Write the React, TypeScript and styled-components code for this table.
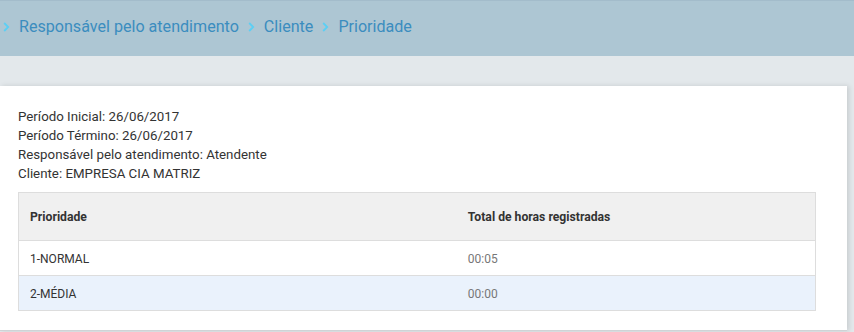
import React from 'react'
import styled, { createGlobalStyle } from 'styled-components'

const GlobalStyle = createGlobalStyle`
    html, body {
        margin: 0;
        padding: 0;
        background: #e3e8eb;
        font-family: Roboto, "Liberation Sans", sans-serif;
    }
`

const crumbs = ['Responsável pelo atendimento', 'Cliente', 'Prioridade']

const filters = [
    'Período Inicial: 26/06/2017',
    'Período Término: 26/06/2017',
    'Responsável pelo atendimento: Atendente',
    'Cliente: EMPRESA CIA MATRIZ',
]

const rows = [
    { prioridade: '1-NORMAL', total: '00:05' },
    { prioridade: '2-MÉDIA', total: '00:00' },
]

function Chevron() {
    return (
        <svg width="7" height="10" viewBox="0 0 7 10">
            <path d="M1.2 1 L5.2 5 L1.2 9" fill="none" stroke="#5ccff4" strokeWidth="1.8" />
        </svg>
    )
}

export default function App() {
    return (
        <>
            <GlobalStyle />
            <Page>
                <Header>
                    {crumbs.map((c) => (
                        <Crumb key={c}>
                            <Chevron />
                            <span>{c}</span>
                        </Crumb>
                    ))}
                </Header>
                <Band />
                <Card>
                    <Filters>
                        {filters.map((f) => (
                            <FilterLine key={f}>{f}</FilterLine>
                        ))}
                    </Filters>
                    <Table>
                        <thead>
                            <tr>
                                <HeadCell>Prioridade</HeadCell>
                                <HeadCell>Total de horas registradas</HeadCell>
                            </tr>
                        </thead>
                        <tbody>
                            {rows.map((r, i) => (
                                <Row key={r.prioridade} $striped={i % 2 === 1}>
                                    <Cell>{r.prioridade}</Cell>
                                    <Cell $muted>{r.total}</Cell>
                                </Row>
                            ))}
                        </tbody>
                    </Table>
                </Card>
            </Page>
        </>
    )
}

const Page = styled.div`
    width: 854px;
    height: 332px;
    overflow: hidden;
    background: #e3e8eb;
`

const Header = styled.div`
    height: 56px;
    box-sizing: border-box;
    background: #adc6d3;
    border-top: 1px solid #a3bccb;
    display: flex;
    align-items: center;
    padding: 0 0 4px 3px;
`

const Crumb = styled.div`
    display: flex;
    align-items: center;
    gap: 9px;
    margin-right: 9px;
    font-size: 16.1px;
    color: #3b8dbf;

    svg {
        margin-top: 1px;
    }
`

const Band = styled.div`
    height: 30px;
`

const Card = styled.div`
    width: 847px;
    height: 245px;
    box-sizing: border-box;
    background: #ffffff;
    border-bottom: 1px solid #cfd3d6;
    box-shadow: 2px 0 5px rgba(0, 0, 0, 0.12);
    padding: 21px 31px 0 18px;
`

const Filters = styled.div`
    display: flex;
    flex-direction: column;
    margin-bottom: 9px;
`

const FilterLine = styled.div`
    font-size: 13.3px;
    line-height: 19px;
    color: #333333;
`

const Table = styled.table`
    width: 100%;
    border-collapse: collapse;
    border: 1px solid #dddddd;
    font-size: 12px;
`

const HeadCell = styled.th`
    width: 55%;
    height: 47px;
    padding: 0 11px;
    text-align: left;
    font-weight: 700;
    font-size: 12.2px;
    color: #333333;
    background: #f0f0f0;
    border-bottom: 1px solid #dddddd;

    &:last-child {
        width: auto;
    }
`

const Row = styled.tr<{ $striped: boolean }>`
    background: ${(p) => (p.$striped ? '#eaf2fc' : '#ffffff')};
    border-bottom: 1px solid #dddddd;
`

const Cell = styled.td<{ $muted?: boolean }>`
    height: 33px;
    padding: 1px 11px 0;
    color: ${(p) => (p.$muted ? '#777777' : '#333333')};
`
